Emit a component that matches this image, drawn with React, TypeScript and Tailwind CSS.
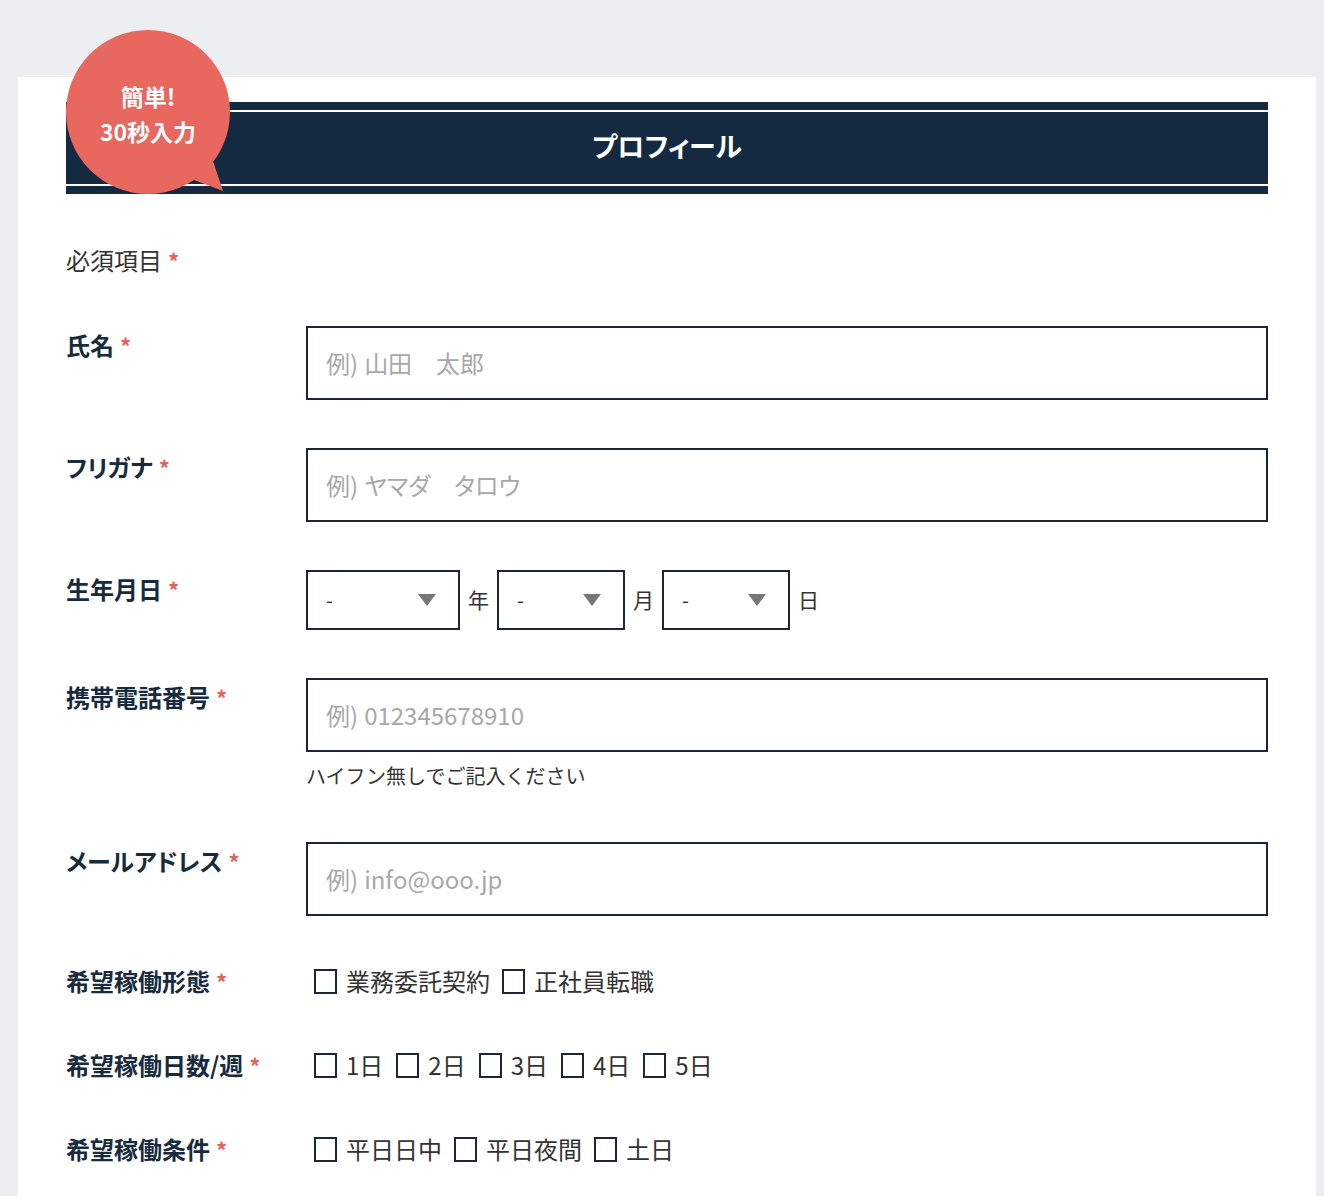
import React from 'react';

const font = { fontFamily: '"Noto Sans CJK JP", "Noto Sans", sans-serif' };

function Req() {
    return <span className="ml-[6px] text-[22px] font-bold text-[#e3625c] align-top">*</span>;
}

function Label({ text, center }: { text: string; center?: boolean }) {
    return (
        <div className={`w-[240px] shrink-0 text-[24px] font-bold leading-[30px] text-[#182b3e] [font-feature-settings:'palt'] ${center ? '' : 'mt-[4px]'}`}>
            {text}
            <Req />
        </div>
    );
}

function TextField({ placeholder }: { placeholder: string }) {
    return (
        <div className="flex h-[74px] w-full items-center border-2 border-[#1b2838] pl-[18px] text-[24px] text-[#a8a8a8]">
            例<span className="mr-[6px]">)</span>
            <span className="[font-feature-settings:'palt']">{placeholder}</span>
        </div>
    );
}

function DateSelect({ width }: { width: string }) {
    return (
        <div className={`flex h-[60px] ${width} items-center justify-between border-2 border-[#1b2838] pl-[18px] pr-[22px] text-[20px] text-[#333]`}>
            <span>-</span>
            <svg width="18" height="12" viewBox="0 0 18 12">
                <polygon points="0,0 18,0 9,12" fill="#777" />
            </svg>
        </div>
    );
}

function Check({ text }: { text: string }) {
    return (
        <div className="flex items-center gap-[9px]">
            <span className="block h-[25px] w-[23px] border-2 border-[#1b2838]" />
            <span className="text-[24px] leading-[30px] text-[#333]">{text}</span>
        </div>
    );
}

export default function App() {
    return (
        <div className="min-h-[1196px] bg-[#edeef1] pt-[77px] pl-[18px] pr-[8px]" style={font}>
            <div className="min-h-[1119px] bg-white px-[48px] pt-[25px] pb-[40px]">
                {/* header band */}
                <div className="relative">
                    <div className="bg-[#132a40] py-[8px]">
                        <div className="flex h-[76px] items-center justify-center border-y-2 border-white text-[27px] font-bold text-white [font-feature-settings:'palt']">
                            <span className="-mt-[4px]">プロフィール</span>
                        </div>
                    </div>
                    {/* speech bubble */}
                    <div className="absolute left-0 top-[-72px] h-[168px] w-[164px]">
                        <svg className="absolute inset-0" width="164" height="168" viewBox="0 0 164 168">
                            <circle cx="82" cy="82" r="82" fill="#e8675f" />
                            <polygon points="128,150 146,128 157,161" fill="#e8675f" />
                        </svg>
                        <div className="relative flex flex-col items-center pt-[49px] text-[23px] font-bold leading-[35px] text-white">
                            <span>簡単!</span>
                            <span>30秒入力</span>
                        </div>
                    </div>
                </div>

                <div className="mt-[51px] text-[24px] leading-[30px] text-[#333]">
                    必須項目
                    <Req />
                </div>

                <div className="mt-[51px] flex flex-col">
                    <div className="flex items-start">
                        <Label text="氏名" />
                        <TextField placeholder="山田　太郎" />
                    </div>

                    <div className="mt-[48px] flex items-start">
                        <Label text="フリガナ" />
                        <TextField placeholder="ヤマダ　タロウ" />
                    </div>

                    <div className="mt-[48px] flex items-start">
                        <Label text="生年月日" />
                        <div className="flex items-center gap-[8px] text-[21px] text-[#333]">
                            <DateSelect width="w-[154px]" />
                            <span>年</span>
                            <DateSelect width="w-[128px]" />
                            <span>月</span>
                            <DateSelect width="w-[128px]" />
                            <span>日</span>
                        </div>
                    </div>

                    <div className="mt-[48px] flex items-start">
                        <Label text="携帯電話番号" />
                        <div className="w-full">
                            <TextField placeholder="012345678910" />
                            <div className="mt-[10px] text-[20px] leading-[28px] text-[#333]">ハイフン無しでご記入ください</div>
                        </div>
                    </div>

                    <div className="mt-[52px] flex items-start">
                        <Label text="メールアドレス" />
                        <TextField placeholder="info@ooo.jp" />
                    </div>

                    <div className="mt-[50px] flex items-center">
                        <Label text="希望稼働形態" center />
                        <div className="ml-[8px] flex items-center gap-[12px]">
                            <Check text="業務委託契約" />
                            <Check text="正社員転職" />
                        </div>
                    </div>

                    <div className="mt-[54px] flex items-center">
                        <Label text="希望稼働日数/週" center />
                        <div className="ml-[8px] flex items-center gap-[13px]">
                            <Check text="1日" />
                            <Check text="2日" />
                            <Check text="3日" />
                            <Check text="4日" />
                            <Check text="5日" />
                        </div>
                    </div>

                    <div className="mt-[54px] flex items-center">
                        <Label text="希望稼働条件" center />
                        <div className="ml-[8px] flex items-center gap-[12px]">
                            <Check text="平日日中" />
                            <Check text="平日夜間" />
                            <Check text="土日" />
                        </div>
                    </div>
                </div>
            </div>
        </div>
    );
}
